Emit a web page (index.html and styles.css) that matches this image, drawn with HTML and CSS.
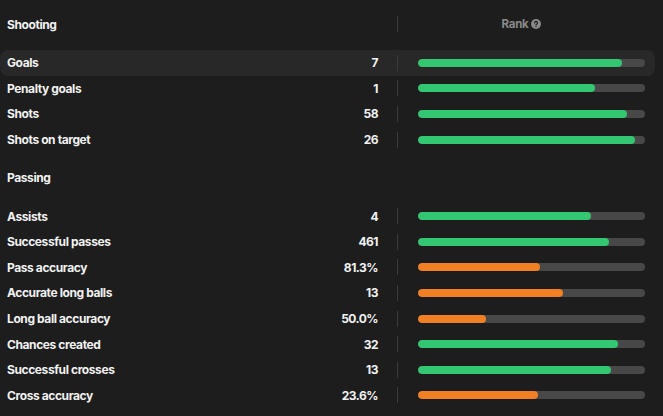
FILE: index.html
```html
<!DOCTYPE html>
<html>
<head>
<meta charset="utf-8">
<link rel="stylesheet" href="styles.css">
</head>
<body>
<div class="stats">
  <div class="row head">
    <div class="label">Shooting</div>
    <div class="value"></div>
    <div class="sep"></div>
    <div class="rank">Rank <span class="help"><svg width="10" height="10" viewBox="0 0 10 10"><circle cx="5" cy="5" r="5" fill="#8a8a8a"/><path d="M3.6 3.9a1.45 1.45 0 1 1 2 1.3c-.45.2-.6.45-.6.9" fill="none" stroke="#1d1d1d" stroke-width="1.2" stroke-linecap="round"/><circle cx="5" cy="7.6" r=".7" fill="#1d1d1d"/></svg></span></div>
  </div>

  <div class="row stat active">
    <div class="label">Goals</div><div class="value">7</div><div class="sep"></div>
    <div class="barcell"><div class="track"><div class="fill green" style="width:89.7%"></div></div></div>
  </div>
  <div class="row stat">
    <div class="label">Penalty goals</div><div class="value">1</div><div class="sep"></div>
    <div class="barcell"><div class="track"><div class="fill green" style="width:78%"></div></div></div>
  </div>
  <div class="row stat">
    <div class="label">Shots</div><div class="value">58</div><div class="sep"></div>
    <div class="barcell"><div class="track"><div class="fill green" style="width:92%"></div></div></div>
  </div>
  <div class="row stat">
    <div class="label">Shots on target</div><div class="value">26</div><div class="sep"></div>
    <div class="barcell"><div class="track"><div class="fill green" style="width:95.6%"></div></div></div>
  </div>

  <div class="row section">
    <div class="label">Passing</div>
  </div>

  <div class="row stat">
    <div class="label">Assists</div><div class="value">4</div><div class="sep"></div>
    <div class="barcell"><div class="track"><div class="fill green" style="width:76.1%"></div></div></div>
  </div>
  <div class="row stat">
    <div class="label">Successful passes</div><div class="value">461</div><div class="sep"></div>
    <div class="barcell"><div class="track"><div class="fill green" style="width:84.1%"></div></div></div>
  </div>
  <div class="row stat">
    <div class="label">Pass accuracy</div><div class="value">81.3%</div><div class="sep"></div>
    <div class="barcell"><div class="track"><div class="fill orange" style="width:53.7%"></div></div></div>
  </div>
  <div class="row stat">
    <div class="label">Accurate long balls</div><div class="value">13</div><div class="sep"></div>
    <div class="barcell"><div class="track"><div class="fill orange" style="width:63.9%"></div></div></div>
  </div>
  <div class="row stat">
    <div class="label">Long ball accuracy</div><div class="value">50.0%</div><div class="sep"></div>
    <div class="barcell"><div class="track"><div class="fill orange" style="width:29.8%"></div></div></div>
  </div>
  <div class="row stat">
    <div class="label">Chances created</div><div class="value">32</div><div class="sep"></div>
    <div class="barcell"><div class="track"><div class="fill green" style="width:88.1%"></div></div></div>
  </div>
  <div class="row stat">
    <div class="label">Successful crosses</div><div class="value">13</div><div class="sep"></div>
    <div class="barcell"><div class="track"><div class="fill green" style="width:85%"></div></div></div>
  </div>
  <div class="row stat">
    <div class="label">Cross accuracy</div><div class="value">23.6%</div><div class="sep"></div>
    <div class="barcell"><div class="track"><div class="fill orange" style="width:52.8%"></div></div></div>
  </div>
</div>
</body>
</html>
```

FILE: styles.css
```css
html, body {
  margin: 0;
  padding: 0;
  background: #1d1d1d;
}
body {
  font-family: Inter, "Noto Sans", sans-serif;
  color: #f2f2f2;
  -webkit-font-smoothing: antialiased;
}
.stats {
  width: 655px;
  display: flex;
  flex-direction: column;
}
.row {
  display: grid;
  grid-template-columns: 1fr auto 1px 247px;
  align-items: center;
  padding: 0 10px 0 7px;
  border-radius: 8px;
}
.row.head {
  height: 48px;
  padding-bottom: 2px;
}
.row.section {
  height: 51px;
}
.row.stat {
  height: 25.6px;
}
.row.active {
  background: #282828;
}
.label {
  font-size: 12px;
  font-weight: 700;
  letter-spacing: -0.4px;
  white-space: nowrap;
}
.value {
  font-size: 12px;
  font-weight: 700;
  text-align: right;
  padding-right: 19px;
  letter-spacing: -0.5px;
}
.sep {
  width: 1px;
  height: 16px;
  background: #3b3b3b;
}
.rank {
  display: flex;
  justify-content: center;
  align-items: center;
  gap: 3px;
  font-size: 11.5px;
  font-weight: 700;
  letter-spacing: -0.3px;
  color: #8a8a8a;
}
.help {
  display: flex;
  align-items: center;
}
.barcell {
  padding-left: 20px;
}
.track {
  height: 8px;
  border-radius: 4px;
  background: #484848;
  overflow: hidden;
}
.fill {
  height: 100%;
  border-radius: 4px;
}
.fill.green {
  background: #33c771;
}
.fill.orange {
  background: #f08023;
}
```
